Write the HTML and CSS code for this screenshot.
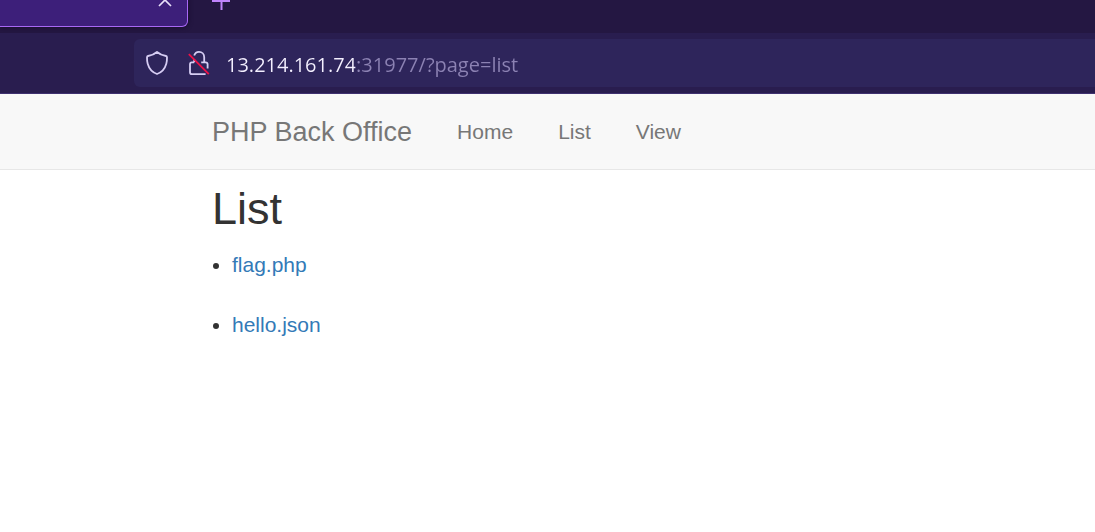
FILE: index.html
```html
<!DOCTYPE html>
<html lang="en">
<head>
<meta charset="utf-8">
<title>PHP Back Office</title>
<link rel="stylesheet" href="styles.css">
</head>
<body>
<div class="browser">
  <div class="tab-strip">
    <div class="tab">
      <button class="icon-button" type="button" aria-label="Close tab">
        <svg width="14" height="14" viewBox="0 0 14 14" fill="none" stroke="#e9e0fa" stroke-width="1.7"><path d="M1 1l12 12M13 1L1 13"/></svg>
      </button>
    </div>
    <button class="icon-button new-tab" type="button" aria-label="New tab">
      <svg width="18" height="18" viewBox="0 0 18 18" fill="none" stroke="#c084fc" stroke-width="2"><path d="M9.500 0v18M0 9h18"/></svg>
    </button>
  </div>
  <div class="toolbar">
    <div class="address-bar">
      <svg width="22" height="24" viewBox="0 0 22 24" fill="none" stroke="#d6cdf3" stroke-width="1.8" stroke-linejoin="round"><path d="M11 1C8.500 3.200 5 4.500 2 5Q1 5.200 1 6.400C1 9 1 10.500 1.700 12.800C3 17.500 6.500 21.500 11 23C15.500 21.500 19 17.500 20.300 12.800C21 10.500 21 9 21 6.400Q21 5.200 20 5C17 4.500 13.500 3.200 11 1z"/></svg>
      <svg width="22" height="26" viewBox="0 0 22 26" fill="none" stroke="#d6cdf3" stroke-width="1.8"><path d="M6.200 5.500C7 3 9 1.900 11 1.900C14 1.900 16.200 4.200 16.200 7.200V12.300M6.200 9V12.300M6.200 12.300H3.800Q2 12.300 2 14.300V22.200Q2 24.200 4 24.200H17.600M13.200 12.300H17.600Q19.600 12.300 19.600 14.300V18.500"/><path d="M.8 4.200L20.800 24.200" stroke="#ee1047"/></svg>
      <input class="address" type="text" aria-label="Address" value="13.214.161.74:31977/?page=list" spellcheck="false">
    </div>
  </div>
</div>
<header class="navbar">
  <nav class="container nav">
    <a class="brand" href="#">PHP Back Office</a>
    <a class="nav-link" href="#">Home</a>
    <a class="nav-link" href="#">List</a>
    <a class="nav-link" href="#">View</a>
  </nav>
</header>
<main class="container">
  <h2 class="title">List</h2>
  <ul class="files">
    <li><a class="file-link" href="#">flag.php</a></li>
    <li><a class="file-link" href="#">hello.json</a></li>
  </ul>
</main>
</body>
</html>
```
FILE: styles.css
```css
* { box-sizing: border-box; }
body {
  margin: 0;
  background: #fff;
  color: #333;
  font: 21px/30px "Liberation Sans", Arial, sans-serif;
}
a { text-decoration: none; }
svg { display: block; flex: none; }

.browser {
  background: #291d4f;
  border-bottom: 1px solid #3f3170;
}
.tab-strip {
  display: flex;
  height: 33px;
  padding-bottom: 6px;
  gap: 24px;
  overflow: hidden;
  align-items: flex-end;
  background: #241742;
}
.tab {
  display: flex;
  flex: none;
  justify-content: flex-end;
  align-items: flex-end;
  width: 188px;
  height: 40px;
  padding: 0 15px 19px 0;
  background: #3d1f7a;
  border: 1px solid #a868f5;
  border-left: 0;
  border-radius: 0 6px 6px 0;
  box-shadow: 0 0 5px #160c2c;
}
.icon-button {
  padding: 0;
  border: 0;
  background: none;
}
.new-tab { padding-bottom: 17px; }
.toolbar { padding: 6px 0 6px 134px; }
.address-bar {
  display: flex;
  align-items: center;
  gap: 20px;
  height: 48px;
  padding-left: 12px;
  border-radius: 6px 0 0 6px;
  background: #2e255b;
}
.address {
  flex: 1;
  min-width: 0;
  height: 32px;
  margin-left: -4px;
  padding: 2px 0 0;
  border: 0;
  outline: 0;
  font: 20px/30px "Open Sans", "Noto Sans", sans-serif;
  color: #8c82b3;
  background: linear-gradient(90deg, #f4f0ff 129px, #8c82b3 129px);
  -webkit-background-clip: text;
  background-clip: text;
  -webkit-text-fill-color: transparent;
}

.navbar {
  background: #f8f8f8;
  border-bottom: 1px solid #e7e7e7;
}
.container { padding: 0 212px; }
.nav {
  display: flex;
  align-items: center;
  gap: 45px;
  height: 75px;
}
.brand, .nav-link {
  color: #777;
  white-space: nowrap;
}
.brand { font-size: 27px; }

.title {
  margin: 14px 0 16px;
  font-size: 45px;
  font-weight: 400;
  line-height: 50px;
}
.files {
  display: grid;
  gap: 30px;
  margin: 0;
  padding-left: 20px;
}
.file-link { color: #337ab7; }
```
